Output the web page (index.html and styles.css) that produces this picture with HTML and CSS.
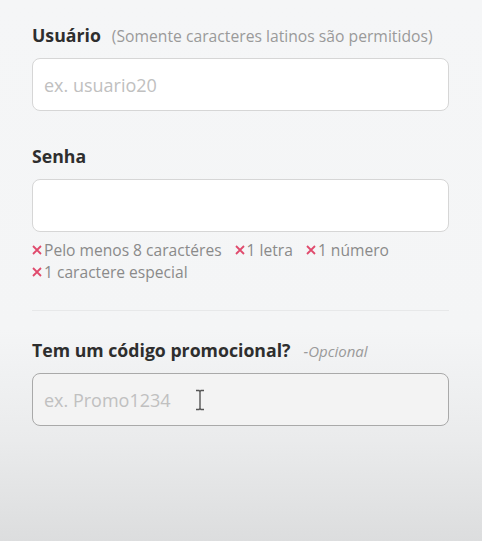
FILE: index.html
```html
<!DOCTYPE html>
<html lang="pt">
<head>
<meta charset="utf-8">
<link rel="stylesheet" href="styles.css">
</head>
<body>
<form class="form">
  <div class="field">
    <div class="label-row"><span class="label">Usuário</span><span class="hint">(Somente caracteres latinos são permitidos)</span></div>
    <div class="input"><span class="placeholder">ex. usuario20</span></div>
  </div>
  <div class="field field-pass">
    <div class="label-row"><span class="label">Senha</span></div>
    <div class="input"></div>
    <ul class="rules">
      <li><svg class="x" width="10" height="10" viewBox="0 0 10 10"><path d="M1 1L9 9M9 1L1 9" stroke="#e04a6c" stroke-width="1.8"/></svg>Pelo menos 8 caractéres</li>
      <li><svg class="x" width="10" height="10" viewBox="0 0 10 10"><path d="M1 1L9 9M9 1L1 9" stroke="#e04a6c" stroke-width="1.8"/></svg>1 letra</li>
      <li><svg class="x" width="10" height="10" viewBox="0 0 10 10"><path d="M1 1L9 9M9 1L1 9" stroke="#e04a6c" stroke-width="1.8"/></svg>1 número</li>
      <li><svg class="x" width="10" height="10" viewBox="0 0 10 10"><path d="M1 1L9 9M9 1L1 9" stroke="#e04a6c" stroke-width="1.8"/></svg>1 caractere especial</li>
    </ul>
  </div>
  <hr class="divider">
  <div class="field">
    <div class="label-row"><span class="label">Tem um código promocional?</span><span class="optional">-Opcional</span></div>
    <div class="input input-hover"><span class="placeholder">ex. Promo1234</span>
      <svg class="ibeam" width="10" height="22" viewBox="0 0 10 22"><path d="M1 1.5h3l1 1 1-1h3M5 2.5v17M1 20.5h3l1-1 1 1h3" fill="none" stroke="#555" stroke-width="1.4"/></svg>
    </div>
  </div>
</form>
</body>
</html>
```
FILE: styles.css
```css
html, body {
  margin: 0;
  padding: 0;
  height: 100%;
}
body {
  background: linear-gradient(to bottom, #f5f6f7 0px, #f4f5f6 330px, #eaebec 440px, #dcddde 541px);
  font-family: "Open Sans", "Noto Sans", sans-serif;
  color: #333;
}
.form {
  padding: 23px 33px 0 32px;
}
.label-row {
  display: flex;
  align-items: baseline;
  height: 22px;
  margin-bottom: 13px;
  white-space: nowrap;
}
.label {
  font-weight: 700;
  font-size: 17.7px;
  color: #2e2e2e;
  margin-right: 11px;
}
.hint {
  font-size: 15.7px;
  color: #9a9a9a;
}
.optional {
  font-size: 15px;
  font-style: italic;
  color: #9a9a9a;
  margin-left: 2px;
}
.input {
  position: relative;
  box-sizing: border-box;
  height: 53px;
  background: #fff;
  border: 1.5px solid #d6d6d6;
  border-radius: 8px;
  display: flex;
  align-items: center;
  padding: 0 11px;
}
.placeholder {
  font-size: 18px;
  color: #c0c0c0;
}
.field + .field {
  margin-top: 33px;
}
.rules {
  list-style: none;
  margin: 7px 0 0;
  padding: 0;
  display: flex;
  flex-wrap: wrap;
  column-gap: 13px;
  width: 380px;
}
.rules li {
  font-size: 15.6px;
  line-height: 22px;
  color: #8a8a8a;
  white-space: nowrap;
  display: flex;
  align-items: center;
}
.x {
  margin-right: 2px;
  flex: none;
}
.divider {
  border: 0;
  border-top: 1.5px solid #e7e8e9;
  margin: 27px 0 27px;
}
.input-hover {
  background: #f3f3f3;
  border-color: #a9a9a9;
}
.ibeam {
  position: absolute;
  left: 162px;
  top: 15px;
}
```
